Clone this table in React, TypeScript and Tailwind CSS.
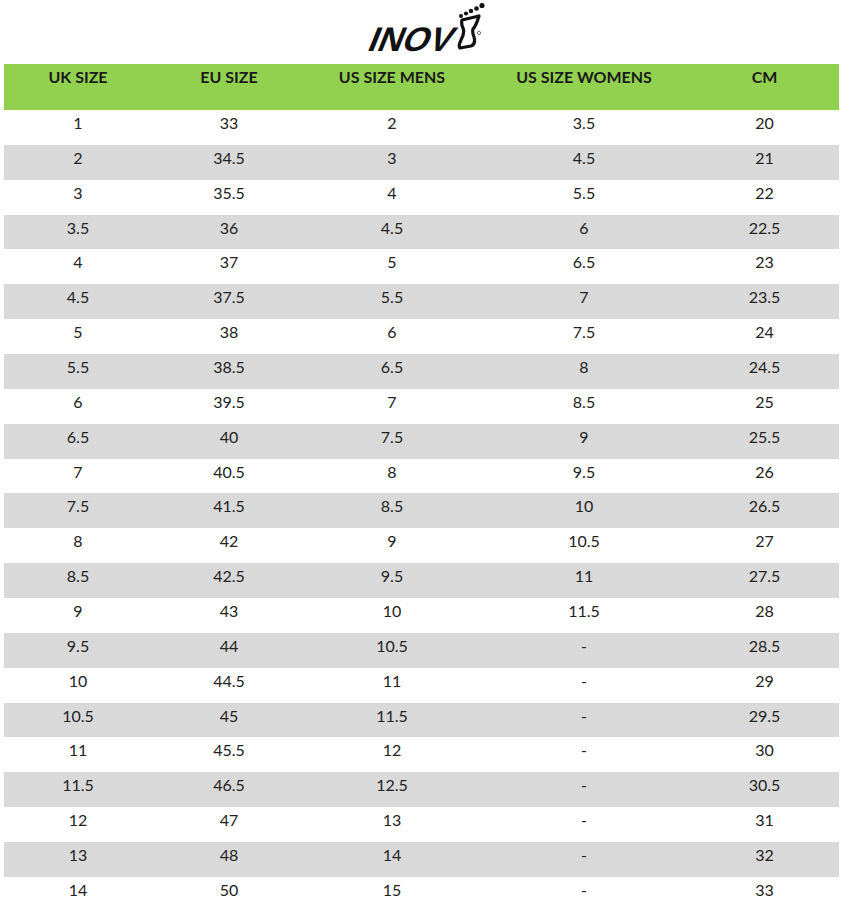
const headers = ["UK SIZE", "EU SIZE", "US SIZE MENS", "US SIZE WOMENS", "CM"];

const rows: string[][] = [
  ["1", "33", "2", "3.5", "20"],
  ["2", "34.5", "3", "4.5", "21"],
  ["3", "35.5", "4", "5.5", "22"],
  ["3.5", "36", "4.5", "6", "22.5"],
  ["4", "37", "5", "6.5", "23"],
  ["4.5", "37.5", "5.5", "7", "23.5"],
  ["5", "38", "6", "7.5", "24"],
  ["5.5", "38.5", "6.5", "8", "24.5"],
  ["6", "39.5", "7", "8.5", "25"],
  ["6.5", "40", "7.5", "9", "25.5"],
  ["7", "40.5", "8", "9.5", "26"],
  ["7.5", "41.5", "8.5", "10", "26.5"],
  ["8", "42", "9", "10.5", "27"],
  ["8.5", "42.5", "9.5", "11", "27.5"],
  ["9", "43", "10", "11.5", "28"],
  ["9.5", "44", "10.5", "-", "28.5"],
  ["10", "44.5", "11", "-", "29"],
  ["10.5", "45", "11.5", "-", "29.5"],
  ["11", "45.5", "12", "-", "30"],
  ["11.5", "46.5", "12.5", "-", "30.5"],
  ["12", "47", "13", "-", "31"],
  ["13", "48", "14", "-", "32"],
  ["14", "50", "15", "-", "33"],
];

// column widths in px, table spans x=4..839
const cols = ["w-[148px]", "w-[154px]", "w-[172px]", "w-[212px]", "w-[149px]"];

function FootMark() {
  return (
    <svg width="28" height="48" viewBox="0 0 28 48">
      {/* toes */}
      <circle cx="4" cy="14" r="2" fill="#111" />
      <circle cx="9" cy="11.5" r="2.1" fill="#111" />
      <circle cx="14" cy="9" r="2.2" fill="#111" />
      <circle cx="19.5" cy="6.5" r="2.3" fill="#111" />
      <circle cx="25" cy="3.5" r="2.6" fill="#111" />
      {/* sole */}
      <path
        d="M5 18 L22 14 Q19 24 16 27 Q15 30 17 35 Q19 42 14 44 L3 46 Q1 44 4 38 Q8 31 6 26 Q4 22 5 18 Z"
        fill="none"
        stroke="#111"
        strokeWidth="3.2"
        strokeLinejoin="round"
      />
      <circle cx="22" cy="31" r="1.6" fill="none" stroke="#333" strokeWidth="0.7" />
    </svg>
  );
}

export default function App() {
  return (
    <div className="min-h-[900px] w-[849px] overflow-hidden bg-white font-['Lato','Open_Sans',sans-serif] text-[#222]">
      {/* Logo */}
      <div className="flex h-[64px] items-start justify-center">
        <span className="mt-[22px] inline-block w-[93px] origin-bottom-left font-['Liberation_Sans',sans-serif] text-[34px] leading-none font-black whitespace-nowrap text-[#111] [transform:skewX(-22deg)]">
          INOV
        </span>
        <div className="mt-[2px]">
          <FootMark />
        </div>
      </div>

      {/* Table */}
      <div className="ml-[4px] w-[835px]">
        <div className="flex h-[46px] bg-[#92d050]">
          {headers.map((h, i) => (
            <div
              key={h}
              className={`${cols[i]} pt-[2px] text-center text-[16px] leading-[22px] font-bold text-[#1a1a1a]`}
            >
              {h}
            </div>
          ))}
        </div>
        {rows.map((r, ri) => (
          <div
            key={ri}
            className={`flex h-[34.86px] ${ri % 2 === 1 ? "bg-[#d9d9d9]" : "bg-white"}`}
          >
            {r.map((c, ci) => (
              <div
                key={ci}
                className={`${cols[ci]} pt-[2px] text-center text-[16px] leading-[22px]`}
              >
                {c}
              </div>
            ))}
          </div>
        ))}
      </div>
    </div>
  );
}
